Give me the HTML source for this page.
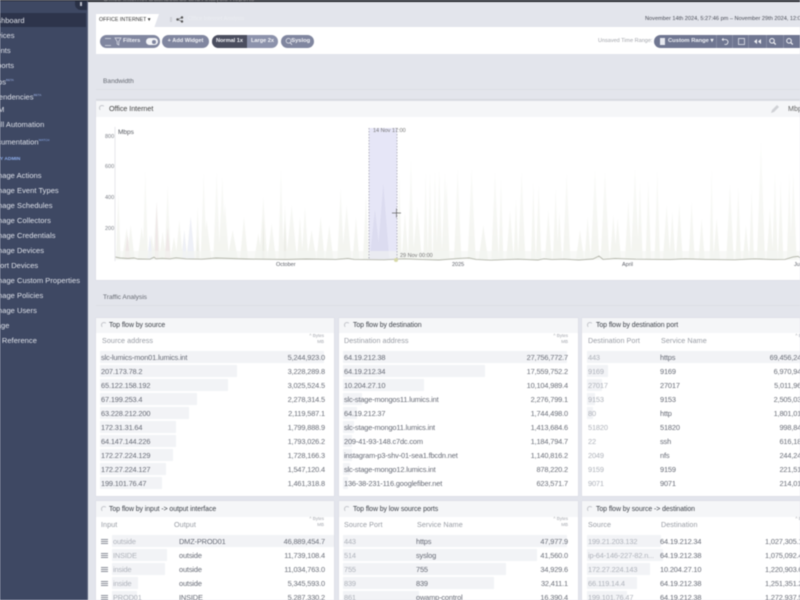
<!DOCTYPE html>
<html><head><meta charset="utf-8">
<style>
html,body{margin:0;padding:0;width:800px;height:600px;overflow:hidden;background:#e3e5ec}
#w{position:relative;width:800px;height:600px;overflow:hidden;background:#e3e5ec;font-family:"Liberation Sans",sans-serif;filter:blur(.6px)}
#w div,#w span{position:absolute;white-space:nowrap}
.s{left:-12.500px;margin-top:1px;font-size:7.500px;line-height:12px;color:#dfe2ea;letter-spacing:.05px}
.c{background:#fff;overflow:hidden;box-shadow:0 0 1px #c8cad2}
.h{left:0;top:0;right:0;height:15px;background:#f5f6f8}
.t{top:3.500px;font-size:6.900px;line-height:10px;color:#3c4048;letter-spacing:-.05px}
.sp{left:3px;top:4px;width:4px;height:4px;border:1px solid #c2c4ca;border-right-color:transparent;border-bottom-color:transparent;border-radius:50%}
.l{font-size:7.200px;line-height:10px;color:#979ba3;top:18px;letter-spacing:.05px}
.u{font-size:4.500px;line-height:6px;color:#a3a6ad;text-align:right}
.b{height:12px;background:#f2f3f6}
.x{font-size:7.400px;line-height:12px;color:#666a75;letter-spacing:-.15px;margin-top:.5px}
.g{color:#aeb2ba}
.v{text-align:right;font-size:7.400px;line-height:12px;color:#6a6e78;letter-spacing:-.15px;margin-top:.5px}
.p{top:35px;height:13px;border-radius:7px;background:#80869f;color:#f2f3f7;font-size:6px;font-weight:bold;line-height:13px;text-align:center}
.al{font-size:5.500px;line-height:8px;color:#7d8088}
.m{left:5px;width:7px;height:3px;border-top:1px solid #8a8e98;border-bottom:1px solid #8a8e98;background:linear-gradient(transparent 33%,#8a8e98 33%,#8a8e98 66%,transparent 66%)}
</style></head><body>
<div id="w">
<div style="left:0;top:0;width:800px;height:1.500px;background:#23252b"></div>
<div style="left:103px;top:-4px;font-size:7px;line-height:8px;color:#777">Office Internet Dashboards and Analysis Reports</div>

<div style="left:0;top:1px;width:87px;height:599px;background:#3e4863"></div>
<div style="left:87px;top:1px;width:1px;height:599px;background:#59617a"></div>
<div style="left:75px;top:1px;width:12px;height:9px;background:#2a3146;border-radius:0 0 0 6px"></div>
<div style="left:80px;top:2px;width:2px;height:4px;background:#b9bdc8"></div>
<div style="left:0;top:13px;width:86px;height:14px;background:#2d344b"></div>
<div class="s" style="top:14px">Dashboard</div>
<div class="s" style="top:29px">Devices</div>
<div class="s" style="top:44px">Events</div>
<div class="s" style="top:59px">Reports</div>
<div class="s" style="top:73px">Maps<sup style="font-size:3px;color:#9fb4e8">BETA</sup></div>
<div class="s" style="top:88px;left:-15px">Dependencies<sup style="font-size:3px;color:#9fb4e8">BETA</sup></div>
<div class="s" style="top:103px">NPM</div>
<div class="s" style="top:118px;left:-6px">Bill Automation</div>
<div class="s" style="top:133px">Documentation<sup style="font-size:3px;color:#8fb0f0">WATCH</sup></div>
<div class="s" style="top:153px;left:-4px;font-size:4.800px;font-weight:bold;color:#8fb0ee">MY ADMIN</div>
<div class="s" style="top:169px">Manage Actions</div>
<div class="s" style="top:184px">Manage Event Types</div>
<div class="s" style="top:199px">Manage Schedules</div>
<div class="s" style="top:214px">Manage Collectors</div>
<div class="s" style="top:229px">Manage Credentials</div>
<div class="s" style="top:244px">Manage Devices</div>
<div class="s" style="top:259px">Import Devices</div>
<div class="s" style="top:274px">Manage Custom Properties</div>
<div class="s" style="top:289px">Manage Policies</div>
<div class="s" style="top:304px">Manage Users</div>
<div class="s" style="top:319px">Usage</div>
<div class="s" style="top:334px">API Reference</div>

<div style="left:96px;top:14px;width:58px;height:14px;background:#fff"></div>
<div style="left:154px;top:14px;width:0;height:0;border-left:5px solid #fff;border-top:0 solid transparent;border-bottom:14px solid transparent"></div>
<div style="left:99px;top:16px;font-size:5.300px;line-height:9px;color:#333">OFFICE INTERNET &#9662;</div>
<div style="left:170px;top:17px;width:2px;height:5px;background:#cfd1d8"></div>
<svg style="position:absolute;left:176px;top:16px" width="8" height="7"><circle cx="1.500" cy="3.500" r="1.200" fill="#555"/><circle cx="6" cy="1.500" r="1.200" fill="#555"/><circle cx="6" cy="5.500" r="1.200" fill="#555"/><path d="M1.500 3.500L6 1.500M1.500 3.500L6 5.500" stroke="#555" stroke-width=".6"/></svg>
<div style="left:188px;top:15px;font-size:5.500px;line-height:9px;color:#eceef2">Office Internet Analysis</div>
<div style="left:645px;top:15px;font-size:5.600px;line-height:9px;color:#4a4d57">November 14th 2024, 5:27:46 pm &#8211; November 29th 2024, 12:00 am</div>

<div style="left:96px;top:27px;width:704px;height:27px;background:#fff"></div>
<div class="p" style="left:100px;width:60px"></div>
<div style="left:105px;top:38px;width:6px;height:6px;border-top:1px solid #c3c7d4;border-bottom:1px solid #c3c7d4"></div>
<svg style="position:absolute;left:114px;top:37px" width="8" height="9"><path d="M1 1h6L4.800 4.500V8L3.200 7V4.500z" fill="none" stroke="#e2e4ec" stroke-width=".7"/></svg>
<div style="left:123px;top:35px;font-size:5.800px;font-weight:bold;line-height:13px;color:#eef0f5">Filters</div>
<div style="left:146px;top:38px;width:12px;height:7px;border-radius:4px;background:#f4f5f8"></div>
<div style="left:152px;top:39.500px;width:4px;height:4px;border-radius:50%;background:#80869f"></div>
<div class="p" style="left:162px;width:47px;font-size:5.600px">+ Add Widget</div>
<div class="p" style="left:212px;width:66px;background:#8c92ab"></div>
<div class="p" style="left:212px;width:35px;background:#4b4e5f;border-radius:7px 0 0 7px;font-size:5.600px">Normal 1x</div>
<div class="p" style="left:247px;width:31px;background:transparent;font-size:5.600px">Large 2x</div>
<div class="p" style="left:281px;width:33px;font-size:5.800px">&nbsp;&nbsp;&nbsp;&nbsp;Syslog</div>
<svg style="position:absolute;left:285px;top:37px" width="8" height="9"><circle cx="3.500" cy="3.800" r="2.400" fill="none" stroke="#e8eaf0" stroke-width=".7"/><path d="M5.200 5.600L7 7.800" stroke="#e8eaf0" stroke-width=".8"/></svg>
<div style="left:598px;top:37px;font-size:5.500px;line-height:9px;color:#a3a5ab">Unsaved Time Range:</div>
<div style="left:654px;top:35px;width:160px;height:13px;border-radius:7px;background:#6f7691"></div>
<div style="left:660px;top:38px;width:5px;height:7px;background:#e7e9f0"></div>
<div style="left:668px;top:35px;font-size:5.800px;font-weight:bold;line-height:13px;color:#eef0f5">Custom Range &#9662;</div>
<div style="left:716px;top:35px;width:1px;height:13px;background:#868ca4"></div>
<div style="left:732px;top:35px;width:1px;height:13px;background:#868ca4"></div>
<div style="left:748px;top:35px;width:1px;height:13px;background:#868ca4"></div>
<div style="left:766px;top:35px;width:1px;height:13px;background:#868ca4"></div>
<div style="left:783px;top:35px;width:1px;height:13px;background:#868ca4"></div>
<svg style="position:absolute;left:718px;top:35px" width="82" height="13" fill="none" stroke="#f0f1f5"><path d="M4 4.500h3.500a2.500 2.500 0 1 1-1 4.800M4 4.500l1.500-1.200M4 4.500l1.500 1.200" stroke-width=".8"/><rect x="20.500" y="3.500" width="6" height="6" stroke-width=".7"/><path d="M36 6.500l3-2.500v5zM40 6.500l3-2.500v5z" fill="#f0f1f5" stroke="none"/><circle cx="54" cy="5.800" r="2.300" stroke-width="1"/><path d="M55.800 7.600l2 2" stroke-width="1.200"/><circle cx="71" cy="5.800" r="2.300" stroke-width="1"/><path d="M72.800 7.600l2 2" stroke-width="1.200"/></svg>

<div style="left:103px;top:77px;font-size:6.600px;line-height:9px;color:#666a72">Bandwidth</div>
<div style="left:96px;top:89px;width:704px;height:1px;background:#dcdee5"></div>
<div style="left:96px;top:99px;width:704px;height:1px;background:#d4d6dd"></div>

<div class="c" style="left:96px;top:101px;width:704px;height:179px">
 <div class="h" style="height:16px"></div>
 <div class="sp"></div>
 <div class="t" style="left:13px;top:3px;font-size:7.200px;color:#444">Office Internet</div>
 <svg style="position:absolute;left:674px;top:3px" width="10" height="10"><path d="M1 9l1-3 5-5 2 2-5 5z" fill="#d0d2d6"/></svg>
 <div style="left:692px;top:3px;font-size:7.200px;line-height:10px;color:#666">Mbps</div>
</div>
<svg style="position:absolute;left:96px;top:118px" width="704" height="160" viewBox="96 118 704 160">
 <defs><linearGradient id="f" gradientUnits="userSpaceOnUse" x1="0" y1="60" x2="0" y2="420"><stop offset="0" stop-color="#fbfcfa"/><stop offset=".55" stop-color="#f7f8f5"/><stop offset="1" stop-color="#f3f4ef"/></linearGradient></defs>
 <rect x="369" y="128" width="28" height="132" fill="#e6e6f7"/>
 <g transform="translate(90 120) scale(.3333)">
  <path fill="url(#f)" d="M85 210l-7 208h14zM110 325l-14 93h28zM122 315l-12 103h24zM155 320l-12 98h24zM166 150l-8 268h16zM185 345l-10 73h20zM200 245l-11 173h22zM218 335l-11 83h22zM233 195l-9 223h18zM252 350l-11 68h22zM268 300l-11 118h22zM283 330l-10 88h20zM302 290l-13 128h26zM323 260l-7 158h14zM341 158l-9 260h18zM350 300l-14 118h28zM380 155l-10 263h20zM397 170l-11 248h22zM405 250l-12 168h24zM428 330l-16 88h32zM462 290l-12 128h24zM505 340l-12 78h24zM520 230l-12 188h24zM545 310l-13 108h26zM573 145l-8 273h16zM585 255l-8 163h16zM605 255l-16 163h32zM630 290l-9 128h18zM645 260l-10 158h20zM665 330l-14 88h28zM692 290l-12 128h24zM718 315l-12 103h24zM752 205l-10 213h20zM770 255l-14 163h28zM798 290l-10 128h20zM828 220l-9 198h18zM855 265l-14 153h28zM928 155l-7 263h14zM945 275l-10 143h20zM963 115l-9 303h18zM982 260l-14 158h28zM1007 155l-7 263h14zM1020 155l-7 263h14zM1035 150l-7 268h14zM1048 150l-9 268h18zM1065 155l-10 263h20z"/>
  <path fill="#dcdcf0" d="M855 265l-16 153h32zM880 190l-18 228h36z"/>
  <path fill="#efe8e8" d="M200 245l-6 173h12zM233 320l-9 98h18zM112 345l-9 73h18z"/>
  <path fill="#eef0f7" d="M302 290l-12 128h24zM180 345l-8 73h16zM283 330l-7 88h14z"/>
  <path fill="#ebece6" d="M520 290l-4 128h8zM585 300l-4 118h8zM323 350l-4 68h8z"/>
 </g>
 <g transform="translate(440 120) scale(.3333)">
  <path fill="url(#f)" d="M20 185l-9 233h18zM53 145l-11 273h22zM95 145l-12 273h24zM130 315l-14 103h28zM165 155l-11 263h22zM183 175l-7 243h14zM210 270l-11 148h22zM228 235l-7 183h14zM245 155l-11 263h22zM280 185l-7 233h14zM296 195l-8 223h16zM325 270l-10 148h20zM347 205l-8 213h16zM358 275l-8 143h16zM380 160l-11 258h22zM420 330l-12 88h24zM443 290l-9 128h18zM465 150l-13 268h26zM495 155l-13 263h26zM520 285l-10 133h20zM533 295l-10 123h20zM565 240l-10 178h20zM585 145l-12 273h24zM600 185l-8 233h16zM625 180l-8 238h16zM652 150l-8 268h16zM680 255l-11 163h22zM697 275l-9 143h18zM718 250l-10 168h20zM755 245l-9 173h18zM785 295l-9 123h18zM815 145l-6 273h12zM830 295l-10 123h20zM870 190l-11 228h22zM895 200l-8 218h16zM918 315l-9 103h18zM935 205l-7 213h14zM963 60l-12 358h24zM990 265l-10 153h20zM1005 155l-8 263h16zM1022 180l-8 238h16zM1048 155l-7 263h14zM1060 155l-10 263h20z"/>
 </g>
 <rect x="115" y="251" width="685" height="9" fill="#f4f5f1" opacity=".6"/>
 <path d="M115 257l5 1 8 .5 6-.5 4 1 12 .2 4-2 2 1.600 6-.5 8 .5 6-1 10 1 16 .4 14-1.200 30 1 40 .5 20-.5 30 .4 12-1 6 1 30 .4 20-1 15 .6 20 .6 20-1.600 10-.5 7 1.500 15 .8 15-.6 12-.4 20 .8 6-1.200 8 .8 12-.4 15 .8 14-1 6-3 4 3.400 12-1 20 .8 35 .4 15-.8 20 .6 30 .4 20-1 18 .8 12-.2 8-2.500 5-.5 4 2.500 6-2 3 2 5-1 3 1 9-2 4 0 2 2 4-.2" fill="none" stroke="#b4b6ab" stroke-width=".9"/>
 <path d="M369 128v132M397 128v132" stroke="#9a9aa8" stroke-width=".7" stroke-dasharray="1.500 1.500"/>
 <path d="M115 127v134" stroke="#e6e7ea" stroke-width="1"/>
 <path d="M392 213h9M396.500 208.500v9" stroke="#666" stroke-width=".7"/>
 <circle cx="396" cy="260" r="2" fill="#d6d8a8"/>
</svg>
<div class="al" style="left:105px;top:133px">800</div>
<div class="al" style="left:105px;top:163px">600</div>
<div class="al" style="left:105px;top:194px">400</div>
<div class="al" style="left:105px;top:225px">200</div>
<div style="left:118px;top:128px;font-size:6.500px;line-height:9px;color:#55585f">Mbps</div>
<div class="al" style="left:373px;top:127px;color:#777">14 Nov 17:00</div>
<div class="al" style="left:400px;top:252px;color:#777">29 Nov 00:00</div>
<div class="al" style="left:276px;top:261px;color:#5d6068">October</div>
<div class="al" style="left:452px;top:261px;color:#5d6068">2025</div>
<div class="al" style="left:622px;top:261px;color:#5d6068">April</div>
<div class="al" style="left:794px;top:261px;color:#5d6068">June</div>

<div style="left:103px;top:293px;font-size:6.600px;line-height:9px;color:#666a72">Traffic Analysis</div>
<div style="left:96px;top:305px;width:704px;height:1px;background:#dcdee5"></div>

<!-- card 1 -->
<div class="c" style="left:96px;top:318px;width:238px;height:178px">
 <div class="h"></div><div class="sp" style="left:5px"></div><div class="t" style="left:13px;top:3px">Top flow by source</div>
 <div class="l" style="left:6px">Source address</div>
 <div class="u" style="right:10px;top:15px">^ Bytes<br>MB</div>
 <div class="b" style="left:4px;top:33px;width:224px"></div>
 <div class="b" style="left:4px;top:47px;width:137px"></div>
 <div class="b" style="left:4px;top:61px;width:128px"></div>
 <div class="b" style="left:4px;top:75px;width:97px"></div>
 <div class="b" style="left:4px;top:89px;width:89px"></div>
 <div class="b" style="left:4px;top:103px;width:76px"></div>
 <div class="b" style="left:4px;top:117px;width:76px"></div>
 <div class="b" style="left:4px;top:131px;width:73px"></div>
 <div class="b" style="left:4px;top:145px;width:66px"></div>
 <div class="b" style="left:4px;top:159px;width:62px"></div>
 <div class="x" style="left:5px;top:33px">slc-lumics-mon01.lumics.int</div><div class="v" style="right:9px;top:33px">5,244,923.0</div>
 <div class="x" style="left:5px;top:47px">207.173.78.2</div><div class="v" style="right:9px;top:47px">3,228,289.8</div>
 <div class="x" style="left:5px;top:61px">65.122.158.192</div><div class="v" style="right:9px;top:61px">3,025,524.5</div>
 <div class="x" style="left:5px;top:75px">67.199.253.4</div><div class="v" style="right:9px;top:75px">2,278,314.5</div>
 <div class="x" style="left:5px;top:89px">63.228.212.200</div><div class="v" style="right:9px;top:89px">2,119,587.1</div>
 <div class="x" style="left:5px;top:103px">172.31.31.64</div><div class="v" style="right:9px;top:103px">1,799,888.9</div>
 <div class="x" style="left:5px;top:117px">64.147.144.226</div><div class="v" style="right:9px;top:117px">1,793,026.2</div>
 <div class="x" style="left:5px;top:131px">172.27.224.129</div><div class="v" style="right:9px;top:131px">1,728,166.3</div>
 <div class="x" style="left:5px;top:145px">172.27.224.127</div><div class="v" style="right:9px;top:145px">1,547,120.4</div>
 <div class="x" style="left:5px;top:159px">199.101.76.47</div><div class="v" style="right:9px;top:159px">1,461,318.8</div>
</div>

<!-- card 2 -->
<div class="c" style="left:339px;top:318px;width:239px;height:178px">
 <div class="h"></div><div class="sp" style="left:5px"></div><div class="t" style="left:14px;top:3px">Top flow by destination</div>
 <div class="l" style="left:5px">Destination address</div>
 <div class="u" style="right:10px;top:15px">^ Bytes<br>MB</div>
 <div class="b" style="left:4px;top:33px;width:224px"></div>
 <div class="b" style="left:4px;top:47px;width:142px"></div>
 <div class="b" style="left:4px;top:61px;width:81px"></div>
 <div class="b" style="left:4px;top:75px;width:19px"></div>
 <div class="b" style="left:4px;top:89px;width:14px"></div>
 <div class="b" style="left:4px;top:103px;width:11px"></div>
 <div class="b" style="left:4px;top:117px;width:9px"></div>
 <div class="b" style="left:4px;top:131px;width:9px"></div>
 <div class="b" style="left:4px;top:145px;width:7px"></div>
 <div class="b" style="left:4px;top:159px;width:5px"></div>
 <div class="x" style="left:5px;top:33px">64.19.212.38</div><div class="v" style="right:10px;top:33px">27,756,772.7</div>
 <div class="x" style="left:5px;top:47px">64.19.212.34</div><div class="v" style="right:10px;top:47px">17,559,752.2</div>
 <div class="x" style="left:5px;top:61px">10.204.27.10</div><div class="v" style="right:10px;top:61px">10,104,989.4</div>
 <div class="x" style="left:5px;top:75px">slc-stage-mongos11.lumics.int</div><div class="v" style="right:10px;top:75px">2,276,799.1</div>
 <div class="x" style="left:5px;top:89px">64.19.212.37</div><div class="v" style="right:10px;top:89px">1,744,498.0</div>
 <div class="x" style="left:5px;top:103px">slc-stage-mongo11.lumics.int</div><div class="v" style="right:10px;top:103px">1,413,684.6</div>
 <div class="x" style="left:5px;top:117px">209-41-93-148.c7dc.com</div><div class="v" style="right:10px;top:117px">1,184,794.7</div>
 <div class="x" style="left:5px;top:131px">instagram-p3-shv-01-sea1.fbcdn.net</div><div class="v" style="right:10px;top:131px">1,140,816.2</div>
 <div class="x" style="left:5px;top:145px">slc-stage-mongo12.lumics.int</div><div class="v" style="right:10px;top:145px">878,220.2</div>
 <div class="x" style="left:5px;top:159px">136-38-231-116.googlefiber.net</div><div class="v" style="right:10px;top:159px">623,571.7</div>
</div>

<!-- card 3 -->
<div class="c" style="left:582px;top:318px;width:238px;height:178px">
 <div class="h"></div><div class="sp" style="left:5px"></div><div class="t" style="left:14px;top:3px">Top flow by destination port</div>
 <div class="l" style="left:6px">Destination Port</div>
 <div class="l" style="left:79px">Service Name</div>
 <div class="u" style="right:10px;top:15px">^ Bytes<br>MB</div>
 <div class="b" style="left:5px;top:33px;width:223px"></div>
 <div class="b" style="left:5px;top:47px;width:21px"></div>
 <div class="b" style="left:5px;top:61px;width:15px"></div>
 <div class="b" style="left:5px;top:75px;width:8px"></div>
 <div class="b" style="left:5px;top:89px;width:6px"></div>
 <div class="x g" style="left:6px;top:33px">443</div><div class="x" style="left:78px;top:33px">https</div><div class="v" style="left:159px;width:70px;top:33px">69,456,245.3</div>
 <div class="x g" style="left:6px;top:47px">9169</div><div class="x" style="left:78px;top:47px">9169</div><div class="v" style="left:159px;width:70px;top:47px">6,970,943.2</div>
 <div class="x g" style="left:6px;top:61px">27017</div><div class="x" style="left:78px;top:61px">27017</div><div class="v" style="left:159px;width:70px;top:61px">5,011,961.4</div>
 <div class="x g" style="left:6px;top:75px">9153</div><div class="x" style="left:78px;top:75px">9153</div><div class="v" style="left:159px;width:70px;top:75px">2,505,032.1</div>
 <div class="x g" style="left:6px;top:89px">80</div><div class="x" style="left:78px;top:89px">http</div><div class="v" style="left:159px;width:70px;top:89px">1,801,017.6</div>
 <div class="x g" style="left:6px;top:103px">51820</div><div class="x" style="left:78px;top:103px">51820</div><div class="v" style="left:159px;width:70px;top:103px">998,842.5</div>
 <div class="x g" style="left:6px;top:117px">22</div><div class="x" style="left:78px;top:117px">ssh</div><div class="v" style="left:159px;width:70px;top:117px">616,181.3</div>
 <div class="x g" style="left:6px;top:131px">2049</div><div class="x" style="left:78px;top:131px">nfs</div><div class="v" style="left:159px;width:70px;top:131px">244,241.8</div>
 <div class="x g" style="left:6px;top:145px">9159</div><div class="x" style="left:78px;top:145px">9159</div><div class="v" style="left:159px;width:70px;top:145px">221,517.2</div>
 <div class="x g" style="left:6px;top:159px">9071</div><div class="x" style="left:78px;top:159px">9071</div><div class="v" style="left:159px;width:70px;top:159px">214,017.9</div>
</div>

<!-- row 2 card 1 -->
<div class="c" style="left:96px;top:501px;width:238px;height:110px">
 <div class="h" style="height:16px"></div><div class="sp" style="left:5px;top:5px"></div><div class="t" style="left:13px;top:3.500px">Top flow by input -&gt; output interface</div>
 <div class="l" style="left:5px;top:19px">Input</div>
 <div class="l" style="left:78px;top:19px">Output</div>
 <div class="u" style="right:10px;top:15px">^ Bytes<br>MB</div>
 <div class="b" style="left:16px;top:34px;width:222px"></div>
 <div class="b" style="left:16px;top:48px;width:55px"></div>
 <div class="b" style="left:16px;top:62px;width:53px"></div>
 <div class="b" style="left:16px;top:76px;width:26px"></div>
 <div class="b" style="left:16px;top:90px;width:25px"></div>
 <div class="m" style="top:38px"></div>
 <div class="m" style="top:52px"></div>
 <div class="m" style="top:66px"></div>
 <div class="m" style="top:80px"></div>
 <div class="m" style="top:94px"></div>
 <div class="x g" style="left:17px;top:34px">outside</div><div class="x" style="left:83px;top:34px">DMZ-PROD01</div><div class="v" style="right:9px;top:34px">46,889,454.7</div>
 <div class="x g" style="left:17px;top:48px">INSIDE</div><div class="x" style="left:83px;top:48px">outside</div><div class="v" style="right:9px;top:48px">11,739,108.4</div>
 <div class="x g" style="left:17px;top:62px">inside</div><div class="x" style="left:83px;top:62px">outside</div><div class="v" style="right:9px;top:62px">11,034,763.0</div>
 <div class="x g" style="left:17px;top:76px">inside</div><div class="x" style="left:83px;top:76px">outside</div><div class="v" style="right:9px;top:76px">5,345,593.0</div>
 <div class="x g" style="left:17px;top:90px">PROD01</div><div class="x" style="left:83px;top:90px">INSIDE</div><div class="v" style="right:9px;top:90px">5,287,330.2</div>
</div>

<!-- row 2 card 2 -->
<div class="c" style="left:339px;top:501px;width:239px;height:110px">
 <div class="h" style="height:16px"></div><div class="sp" style="left:5px;top:5px"></div><div class="t" style="left:14px;top:3.500px">Top flow by low source ports</div>
 <div class="l" style="left:5px;top:19px">Source Port</div>
 <div class="l" style="left:78px;top:19px">Service Name</div>
 <div class="u" style="right:10px;top:15px">^ Bytes<br>MB</div>
 <div class="b" style="left:4px;top:34px;width:224px"></div>
 <div class="b" style="left:4px;top:48px;width:194px"></div>
 <div class="b" style="left:4px;top:62px;width:163px"></div>
 <div class="b" style="left:4px;top:76px;width:151px"></div>
 <div class="b" style="left:4px;top:90px;width:76px"></div>
 <div class="x g" style="left:5px;top:34px">443</div><div class="x" style="left:77px;top:34px">https</div><div class="v" style="right:10px;top:34px">47,977.9</div>
 <div class="x g" style="left:5px;top:48px">514</div><div class="x" style="left:77px;top:48px">syslog</div><div class="v" style="right:10px;top:48px">41,560.0</div>
 <div class="x g" style="left:5px;top:62px">755</div><div class="x" style="left:77px;top:62px">755</div><div class="v" style="right:10px;top:62px">34,929.6</div>
 <div class="x g" style="left:5px;top:76px">839</div><div class="x" style="left:77px;top:76px">839</div><div class="v" style="right:10px;top:76px">32,411.1</div>
 <div class="x g" style="left:5px;top:90px">861</div><div class="x" style="left:77px;top:90px">owamp-control</div><div class="v" style="right:10px;top:90px">16,390.4</div>
</div>

<!-- row 2 card 3 -->
<div class="c" style="left:582px;top:501px;width:238px;height:110px">
 <div class="h" style="height:16px"></div><div class="sp" style="left:5px;top:5px"></div><div class="t" style="left:14px;top:3.500px">Top flow by source -&gt; destination</div>
 <div class="l" style="left:6px;top:19px">Source</div>
 <div class="l" style="left:79px;top:19px">Destination</div>
 <div class="u" style="right:10px;top:15px">^ Bytes<br>MB</div>
 <div class="b" style="left:5px;top:34px;width:74px"></div>
 <div class="b" style="left:5px;top:48px;width:76px"></div>
 <div class="b" style="left:5px;top:62px;width:63px"></div>
 <div class="b" style="left:5px;top:76px;width:50px"></div>
 <div class="b" style="left:5px;top:90px;width:40px"></div>
 <div class="x g" style="left:6px;top:34px">199.21.203.132</div><div class="x" style="left:78px;top:34px">64.19.212.34</div><div class="v" style="left:183px;top:34px;text-align:left">1,027,305.1</div>
 <div class="x g" style="left:6px;top:48px">ip-64-146-227-82.n...</div><div class="x" style="left:78px;top:48px">64.19.212.38</div><div class="v" style="left:183px;top:48px;text-align:left">1,075,092.4</div>
 <div class="x g" style="left:6px;top:62px">172.27.224.143</div><div class="x" style="left:78px;top:62px">10.204.27.10</div><div class="v" style="left:183px;top:62px;text-align:left">1,220,903.6</div>
 <div class="x g" style="left:6px;top:76px">66.119.14.4</div><div class="x" style="left:78px;top:76px">64.19.212.38</div><div class="v" style="left:183px;top:76px;text-align:left">1,251,351.2</div>
 <div class="x g" style="left:6px;top:90px">199.101.76.47</div><div class="x" style="left:78px;top:90px">64.19.212.38</div><div class="v" style="left:183px;top:90px;text-align:left">1,272,937.5</div>
</div>
</div>
</body></html>
